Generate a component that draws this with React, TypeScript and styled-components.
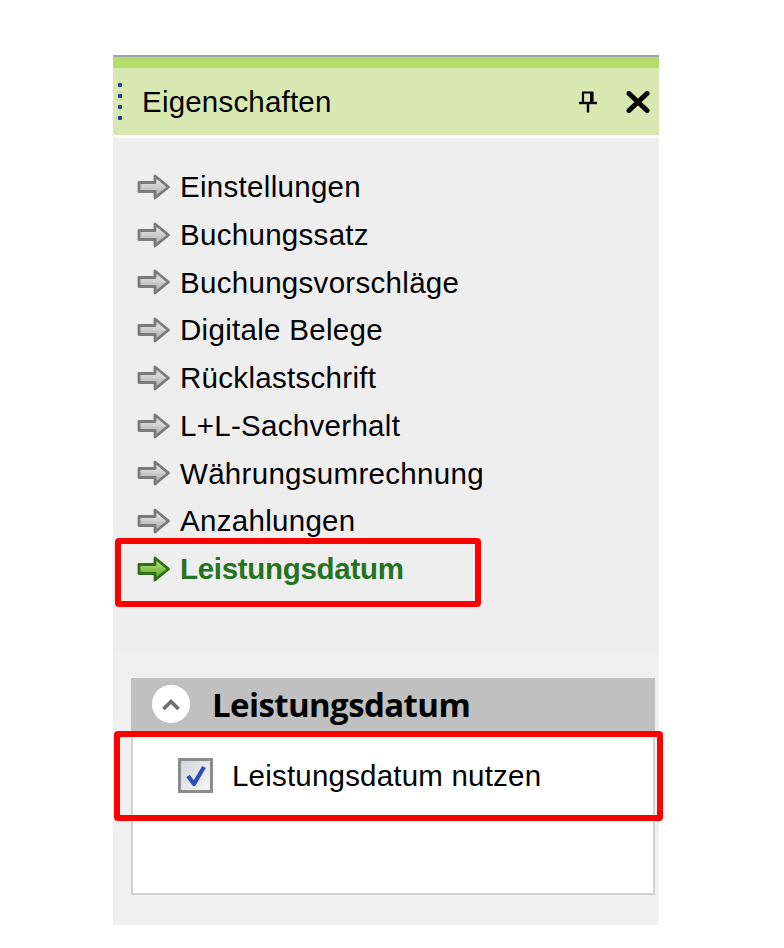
import React from "react";
import styled, { createGlobalStyle } from "styled-components";

const Global = createGlobalStyle`
  html, body { margin: 0; padding: 0; background: #ffffff; }
  body { font-family: "Liberation Sans", Arial, sans-serif; }
`;

const Page = styled.div`
  width: 784px;
  height: 948px;
  padding: 55px 0 0 113px;
  box-sizing: border-box;
`;

const Panel = styled.div`
  width: 546px;
  display: flex;
  flex-direction: column;
`;

const TopStripe = styled.div`
  height: 11px;
  border-top: 2px solid #9ea4ae;
  background: #b6dc6b;
`;

const Header = styled.div`
  height: 67px;
  background: #d7e9b0;
  border-bottom: 3px solid #ffffff;
  display: flex;
  align-items: center;
`;

const Grip = styled.div`
  width: 4px;
  margin-left: 5px;
  display: flex;
  flex-direction: column;
  gap: 7px;
  span {
    width: 4px;
    height: 4px;
    background: #1d3f8f;
    border-radius: 1px;
  }
`;

const Title = styled.div`
  margin-left: 20px;
  font-size: 29.5px;
  letter-spacing: 0.2px;
  color: #000;
  flex: 1;
  line-height: 1;
`;

const HeaderIcons = styled.div`
  display: flex;
  align-items: center;
  gap: 28px;
  margin-right: 9px;
`;

const ListArea = styled.div`
  background: #eeeeee;
  padding: 25px 0 58px 0;
  display: flex;
  flex-direction: column;
`;

const Item = styled.div<{ $active?: boolean }>`
  height: 47.75px;
  display: flex;
  align-items: center;
  position: relative;
  padding-left: 24px;
  font-size: 29.5px;
  color: ${(p) => (p.$active ? "#24741f" : "#000")};
  font-weight: ${(p) => (p.$active ? 700 : 400)};
  letter-spacing: ${(p) => (p.$active ? "-0.3px" : "0.3px")};
  svg { flex: none; }
  ${(p) =>
    p.$active
      ? `&::after {
    content: "";
    position: absolute;
    left: 2px;
    top: -7px;
    width: 366px;
    height: 69px;
    box-sizing: border-box;
    border: 6px solid #ff0000;
    border-radius: 4px;
  }`
      : ""}
`;

const ItemLabel = styled.span`
  margin-left: 9px;
  line-height: 1;
`;

const LowerArea = styled.div`
  background: #f0f0f0;
  padding: 27px 4px 30px 18px;
`;

const Group = styled.div`
  display: flex;
  flex-direction: column;
`;

const GroupHeader = styled.div`
  height: 53px;
  background: #c0c0c0;
  display: flex;
  align-items: center;
  padding-left: 21px;
`;

const Chevron = styled.div`
  width: 38px;
  height: 38px;
  border-radius: 50%;
  background: #ffffff;
  display: flex;
  align-items: center;
  justify-content: center;
`;

const GroupTitle = styled.div`
  margin-left: 22px;
  font-size: 33px;
  font-weight: 700;
  color: #000;
  font-family: "Open Sans", "Liberation Sans", sans-serif;
  letter-spacing: -0.6px;
  line-height: 1;
`;

const GroupBody = styled.div`
  background: #ffffff;
  height: 164px;
  border: 2px solid #d2d2d2;
  border-top: none;
  box-sizing: border-box;
`;

const CheckRow = styled.div`
  height: 90px;
  display: flex;
  align-items: center;
  position: relative;
  padding-left: 45px;
  &::after {
    content: "";
    position: absolute;
    left: -19px;
    right: -10px;
    top: 0;
    bottom: 0;
    border: 6px solid #ff0000;
    border-radius: 4px;
  }
`;

const Box = styled.div`
  width: 35px;
  height: 35px;
  box-sizing: border-box;
  border: 3px solid #8c8c8c;
  background: linear-gradient(135deg, #d3d6dd 0%, #f4f5f7 100%);
  display: flex;
  align-items: center;
  justify-content: center;
`;

const CheckLabel = styled.span`
  margin-left: 19px;
  font-size: 29.5px;
  letter-spacing: 0.2px;
  color: #000;
  line-height: 1;
`;

const Arrow = ({ active }: { active?: boolean }) => {
  const id = active ? "ga" : "gg";
  return (
    <svg width="34" height="28" viewBox="0 0 34 28">
      <defs>
        <linearGradient id={id} x1="0" y1="0" x2="0" y2="1">
          {active ? (
            <>
              <stop offset="0" stopColor="#c2ef80" />
              <stop offset="1" stopColor="#4f9a24" />
            </>
          ) : (
            <>
              <stop offset="0" stopColor="#f4f4f4" />
              <stop offset="1" stopColor="#a4a4a4" />
            </>
          )}
        </linearGradient>
      </defs>
      <path
        d="M2 9.5 H18 V3 L31.5 14 L18 25 V18.5 H2 Z"
        fill={`url(#${id})`}
        stroke={active ? "#2f6e16" : "#7a7a7a"}
        strokeWidth="2.8"
        strokeLinejoin="round"
      />
    </svg>
  );
};

const PinIcon = () => (
  <svg width="20" height="22" viewBox="0 0 20 22">
    <path d="M4 1.5 H14 V11" fill="none" stroke="#000" strokeWidth="2.2" />
    <path d="M5 1.5 V11" stroke="#000" strokeWidth="2.2" />
    <rect x="12" y="1" width="3.5" height="10.5" fill="#000" />
    <path d="M1 12 H19" stroke="#000" strokeWidth="2.4" />
    <path d="M10 12 V21.5" stroke="#000" strokeWidth="2.4" />
  </svg>
);

const CloseIcon = () => (
  <svg width="24" height="22" viewBox="0 0 24 22">
    <path d="M3 2.5 L21 19.5 M21 2.5 L3 19.5" stroke="#000" strokeWidth="5" strokeLinecap="round" />
  </svg>
);

const items = [
  "Einstellungen",
  "Buchungssatz",
  "Buchungsvorschläge",
  "Digitale Belege",
  "Rücklastschrift",
  "L+L-Sachverhalt",
  "Währungsumrechnung",
  "Anzahlungen",
];

export default function App() {
  return (
    <>
      <Global />
      <Page>
        <Panel>
          <TopStripe />
          <Header>
            <Grip>
              <span />
              <span />
              <span />
              <span />
            </Grip>
            <Title>Eigenschaften</Title>
            <HeaderIcons>
              <PinIcon />
              <CloseIcon />
            </HeaderIcons>
          </Header>
          <ListArea>
            {items.map((t) => (
              <Item key={t}>
                <Arrow />
                <ItemLabel>{t}</ItemLabel>
              </Item>
            ))}
            <Item $active>
              <Arrow active />
              <ItemLabel>Leistungsdatum</ItemLabel>
            </Item>
          </ListArea>
          <LowerArea>
            <Group>
              <GroupHeader>
                <Chevron>
                  <svg width="20" height="13" viewBox="0 0 20 13">
                    <path d="M2.5 11 L10 3.5 L17.5 11" fill="none" stroke="#6e6e6e" strokeWidth="3.6" />
                  </svg>
                </Chevron>
                <GroupTitle>Leistungsdatum</GroupTitle>
              </GroupHeader>
              <GroupBody>
                <CheckRow>
                  <Box>
                    <svg width="24" height="24" viewBox="0 0 24 24">
                      <path d="M4 12 L10 20 L20 3" fill="none" stroke="#2f4fb4" strokeWidth="4.2" strokeLinejoin="round" />
                    </svg>
                  </Box>
                  <CheckLabel>Leistungsdatum nutzen</CheckLabel>
                </CheckRow>
              </GroupBody>
            </Group>
          </LowerArea>
        </Panel>
      </Page>
    </>
  );
}
